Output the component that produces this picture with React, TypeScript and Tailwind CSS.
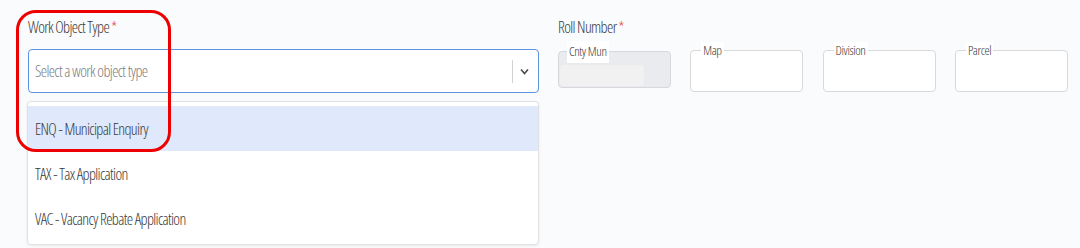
const font = "[font-family:'Open_Sans',sans-serif] [font-stretch:75%] font-[350]";

const options = [
  { code: "ENQ", name: "Municipal Enquiry" },
  { code: "TAX", name: "Tax Application" },
  { code: "VAC", name: "Vacancy Rebate Application" },
];

function FieldLabel({ children }: { children: string }) {
  return (
    <div className="h-[20px] text-[16px] leading-[20px] tracking-[-0.65px] text-[#3a3a3a]">
      {children}
      <span className="ml-[2px] text-[#e53935]">*</span>
    </div>
  );
}

function LegendBox({ label }: { label: string }) {
  return (
    <div className="relative h-[42px] w-[113px] shrink-0 rounded-[4px] border border-[#d9d9d9] bg-white">
      <span className="absolute -top-[9px] left-[10px] bg-white px-[2px] text-[13px] leading-[16px] tracking-[-0.4px] text-[#3a3a3a]">
        {label}
      </span>
    </div>
  );
}

export default function App() {
  return (
    <div className={`relative h-[248px] w-[1080px] overflow-hidden bg-[#fafbfd] ${font}`}>
      <div className="flex gap-[19px] pl-[28px] pt-[17px]">
        <div className="w-[511px] shrink-0">
          <FieldLabel>Work Object Type</FieldLabel>
          <div className="mt-[12px] flex h-[44px] items-center rounded-[4px] border border-[#5a93e0] bg-white pl-[6px] pr-[9px]">
            <span className="flex-1 text-[16px] tracking-[-0.65px] text-[#808080]">Select a work object type</span>
            <span className="h-[23px] w-px bg-[#d2d2d2]" />
            <svg className="ml-[7px]" width="9" height="7" viewBox="0 0 9 7" fill="none">
              <polyline points="1,1.5 4.5,5.5 8,1.5" stroke="#4a4a4a" strokeWidth="1.6" />
            </svg>
          </div>
          <div className="-ml-px mt-[8px] rounded-[4px] border border-[#e2e2e2] bg-white pb-[3px] pt-[4px] shadow-[0_1px_3px_rgba(0,0,0,0.08)]">
            {options.map((o, i) => (
              <div
                key={o.code}
                className={`flex h-[45px] items-center pl-[7px] text-[16px] tracking-[-0.65px] text-[#3a3a3a] ${i === 0 ? "bg-[#dfe9fb]" : ""}`}
              >
                {o.code} - {o.name}
              </div>
            ))}
          </div>
        </div>

        <div className="shrink-0">
          <FieldLabel>Roll Number</FieldLabel>
          <div className="mt-[13px] flex gap-[19.3px]">
            <div className="relative mt-px h-[37px] w-[113px] shrink-0 rounded-[4px] border border-[#d6d8db] bg-[#e9ebee]">
              <div className="ml-px mt-[13px] h-[21px] w-[84px] rounded-[4px] bg-[#f1f1f2]" />
              <span className="absolute -top-[11px] left-[8px] h-[22px] bg-white px-[2px] text-[13px] leading-[20px] tracking-[-0.4px] text-[#3a3a3a]">
                Cnty Mun
              </span>
            </div>
            <LegendBox label="Map" />
            <LegendBox label="Division" />
            <LegendBox label="Parcel" />
          </div>
        </div>
      </div>

      {/* red annotation ring */}
      <div className="pointer-events-none absolute left-[16px] top-[10px] h-[142px] w-[155px] rounded-[20px] border-[3px] border-[#ee0000]" />
    </div>
  );
}
